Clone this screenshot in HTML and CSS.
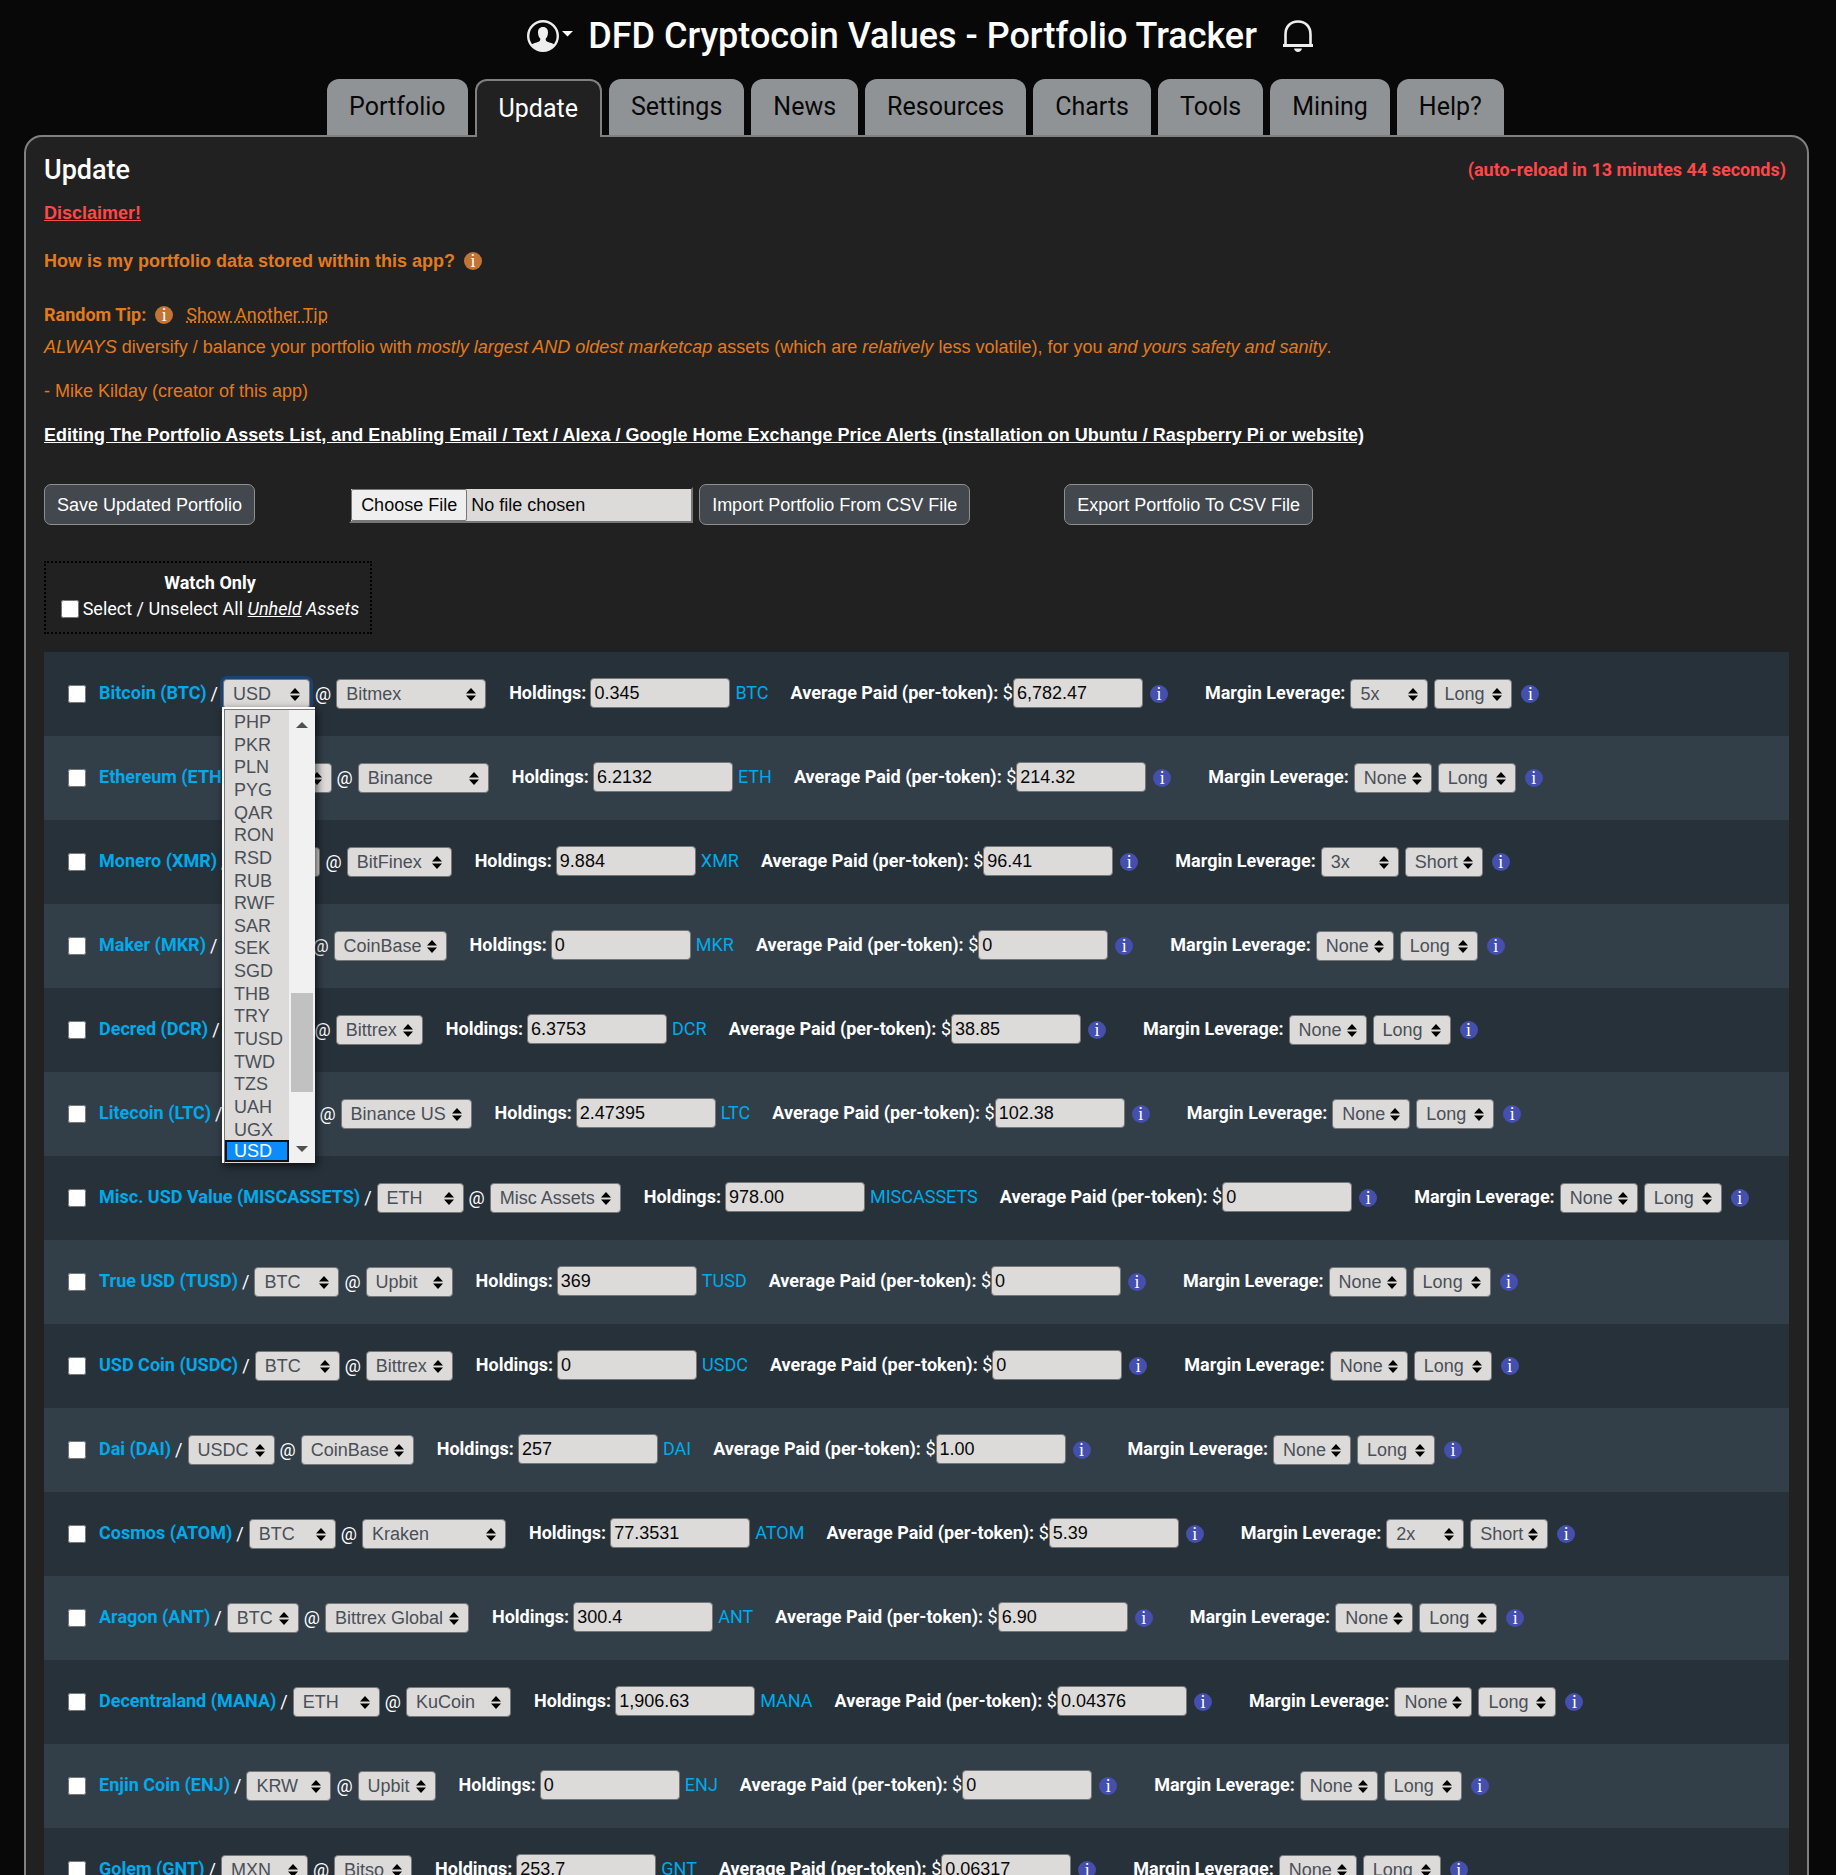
FILE: index.html
```html
<!DOCTYPE html>
<html lang="en">
<head>
<meta charset="utf-8">
<title>DFD Cryptocoin Values - Portfolio Tracker</title>
<link rel="stylesheet" href="styles.css">
</head>
<body>
<header class="top">
  <button class="icon-btn account" aria-label="Account">
    <svg width="32" height="32" viewBox="0 0 32 32"><circle cx="16" cy="16" r="14.8" fill="none" stroke="#eee" stroke-width="2.4"/><path fill="#eee" d="M16 7c-3.400 0-5 2.300-5 5.400 0 2.600.9 4.800 2.200 6.100.3 1.800-.3 2.700-1.600 3.200-2.700.9-5.400 1.500-7.100 3.100C7.300 28.400 11.300 31 16 31s8.700-2.600 11.500-6.200c-1.700-1.600-4.400-2.200-7.100-3.100-1.300-.5-1.900-1.400-1.600-3.200 1.300-1.300 2.200-3.500 2.200-6.100C21 9.300 19.400 7 16 7z"/></svg>
    <svg width="11" height="6" viewBox="0 0 11 6"><path fill="#fff" d="M0 0h11L5.500 5.500z"/></svg>
  </button>
  <h1>DFD Cryptocoin Values - Portfolio Tracker</h1>
  <button class="icon-btn" aria-label="Alerts">
    <svg width="32" height="32" viewBox="0 0 32 32"><path fill="none" stroke="#eee" stroke-width="2.600" d="M3.500 25V14.500C3.500 6.500 8.500 1.500 16 1.500s12.500 5 12.500 13V25"/><path fill="#eee" d="M1 24h30v3H1zM12 28.500h8c-.5 2.200-2 3.500-4 3.500s-3.500-1.300-4-3.500z"/></svg>
  </button>
</header>
<nav class="tabs">
  <a href="#portfolio">Portfolio</a>
  <a href="#update" class="active">Update</a>
  <a href="#settings">Settings</a>
  <a href="#news">News</a>
  <a href="#resources">Resources</a>
  <a href="#charts">Charts</a>
  <a href="#tools">Tools</a>
  <a href="#mining">Mining</a>
  <a href="#help">Help?</a>
</nav>
<main class="panel">
  <div class="panel-head">
    <h2>Update</h2>
    <strong class="reload">(auto-reload in 13 minutes 44 seconds)</strong>
  </div>
  <p class="disclaimer"><a href="#disclaimer">Disclaimer!</a></p>
  <p class="stored"><b>How is my portfolio data stored within this app?</b><span class="info orange">i</span></p>
  <p class="tip-head"><b>Random Tip:</b><span class="info orange">i</span><a href="#tip">Show Another Tip</a></p>
  <p class="tip"><i>ALWAYS</i> diversify / balance your portfolio with <i>mostly largest AND oldest marketcap</i> assets (which are <i>relatively</i> less volatile), for you <i>and yours safety and sanity</i>.</p>
  <p class="author">- Mike Kilday (creator of this app)</p>
  <p class="editing"><a href="#editing">Editing The Portfolio Assets List, and Enabling Email / Text / Alexa / Google Home Exchange Price Alerts (installation on Ubuntu / Raspberry Pi or website)</a></p>
  <div class="actions">
    <button class="btn">Save Updated Portfolio</button>
    <form class="import"><input type="file" class="file" aria-label="CSV file"><button type="button" class="btn">Import Portfolio From CSV File</button></form>
    <button class="btn">Export Portfolio To CSV File</button>
  </div>
  <fieldset class="watch">
    <b>Watch Only</b>
    <label><input type="checkbox"> <span>Select / Unselect All <i><u>Unheld</u> Assets</i></span></label>
  </fieldset>
  <div class="assets">
    <div class="row"><input type="checkbox" aria-label="Watch Bitcoin"><b class="name">Bitcoin (BTC)</b><span>/</span>
      <span class="open"><select class="w87 focus" aria-label="Market"><option>USD</option></select>
        <span class="menu">
          <span class="options" role="listbox" aria-label="Market list"><span role="option">PHP</span><span role="option">PKR</span><span role="option">PLN</span><span role="option">PYG</span><span role="option">QAR</span><span role="option">RON</span><span role="option">RSD</span><span role="option">RUB</span><span role="option">RWF</span><span role="option">SAR</span><span role="option">SEK</span><span role="option">SGD</span><span role="option">THB</span><span role="option">TRY</span><span role="option">TUSD</span><span role="option">TWD</span><span role="option">TZS</span><span role="option">UAH</span><span role="option">UGX</span><span role="option" class="selected" aria-selected="true">USD</span></span>
          <span class="scroll"><svg width="12" height="6" viewBox="0 0 12 6"><path fill="#505050" d="M0 6h12L6 0z"/></svg><span class="thumb"></span><svg width="12" height="6" viewBox="0 0 12 6"><path fill="#505050" d="M0 0h12L6 6z"/></svg></span>
        </span></span>
      <span>@</span><select class="w150" aria-label="Exchange"><option>Bitmex</option></select><label class="hold"><b>Holdings:</b><input type="text" value="0.345"></label><span class="sym">BTC</span><label class="paid"><b>Average Paid (per-token):</b> $<input type="text" value="6,782.47"></label><span class="info">i</span><b class="margin">Margin Leverage:</b><select aria-label="Leverage"><option>5x</option></select><select aria-label="Direction"><option>Long</option></select><span class="info">i</span></div>
    <div class="row"><input type="checkbox" aria-label="Watch Ethereum"><b class="name">Ethereum (ETH)</b><span>/</span><select class="w87" aria-label="Market"><option>BTC</option></select><span>@</span><select class="w131" aria-label="Exchange"><option>Binance</option></select><label class="hold"><b>Holdings:</b><input type="text" value="6.2132"></label><span class="sym">ETH</span><label class="paid"><b>Average Paid (per-token):</b> $<input type="text" value="214.32"></label><span class="info">i</span><b class="margin">Margin Leverage:</b><select aria-label="Leverage"><option>None</option></select><select aria-label="Direction"><option>Long</option></select><span class="info">i</span></div>
    <div class="row"><input type="checkbox" aria-label="Watch Monero"><b class="name">Monero (XMR)</b><span>/</span><select class="w87" aria-label="Market"><option>BTC</option></select><span>@</span><select class="w105" aria-label="Exchange"><option>BitFinex</option></select><label class="hold"><b>Holdings:</b><input type="text" value="9.884"></label><span class="sym">XMR</span><label class="paid"><b>Average Paid (per-token):</b> $<input type="text" value="96.41"></label><span class="info">i</span><b class="margin">Margin Leverage:</b><select aria-label="Leverage"><option>3x</option></select><select aria-label="Direction"><option>Short</option></select><span class="info">i</span></div>
    <div class="row"><input type="checkbox" aria-label="Watch Maker"><b class="name">Maker (MKR)</b><span>/</span><select class="w85" aria-label="Market"><option>BTC</option></select><span>@</span><select class="w113" aria-label="Exchange"><option>CoinBase</option></select><label class="hold"><b>Holdings:</b><input type="text" value="0"></label><span class="sym">MKR</span><label class="paid"><b>Average Paid (per-token):</b> $<input type="text" value="0"></label><span class="info">i</span><b class="margin">Margin Leverage:</b><select aria-label="Leverage"><option>None</option></select><select aria-label="Direction"><option>Long</option></select><span class="info">i</span></div>
    <div class="row"><input type="checkbox" aria-label="Watch Decred"><b class="name">Decred (DCR)</b><span>/</span><select class="w85" aria-label="Market"><option>BTC</option></select><span>@</span><select class="w87" aria-label="Exchange"><option>Bittrex</option></select><label class="hold"><b>Holdings:</b><input type="text" value="6.3753"></label><span class="sym">DCR</span><label class="paid"><b>Average Paid (per-token):</b> $<input type="text" value="38.85"></label><span class="info">i</span><b class="margin">Margin Leverage:</b><select aria-label="Leverage"><option>None</option></select><select aria-label="Direction"><option>Long</option></select><span class="info">i</span></div>
    <div class="row"><input type="checkbox" aria-label="Watch Litecoin"><b class="name">Litecoin (LTC)</b><span>/</span><select class="w87" aria-label="Market"><option>BTC</option></select><span>@</span><select class="w131" aria-label="Exchange"><option>Binance US</option></select><label class="hold"><b>Holdings:</b><input type="text" value="2.47395"></label><span class="sym">LTC</span><label class="paid"><b>Average Paid (per-token):</b> $<input type="text" value="102.38"></label><span class="info">i</span><b class="margin">Margin Leverage:</b><select aria-label="Leverage"><option>None</option></select><select aria-label="Direction"><option>Long</option></select><span class="info">i</span></div>
    <div class="row"><input type="checkbox" aria-label="Watch Misc. USD Value"><b class="name">Misc. USD Value (MISCASSETS)</b><span>/</span><select class="w87" aria-label="Market"><option>ETH</option></select><span>@</span><select class="w131" aria-label="Exchange"><option>Misc Assets</option></select><label class="hold"><b>Holdings:</b><input type="text" value="978.00"></label><span class="sym">MISCASSETS</span><label class="paid"><b>Average Paid (per-token):</b> $<input type="text" value="0"></label><span class="info">i</span><b class="margin">Margin Leverage:</b><select aria-label="Leverage"><option>None</option></select><select aria-label="Direction"><option>Long</option></select><span class="info">i</span></div>
    <div class="row"><input type="checkbox" aria-label="Watch True USD"><b class="name">True USD (TUSD)</b><span>/</span><select class="w85" aria-label="Market"><option>BTC</option></select><span>@</span><select class="w87" aria-label="Exchange"><option>Upbit</option></select><label class="hold"><b>Holdings:</b><input type="text" value="369"></label><span class="sym">TUSD</span><label class="paid"><b>Average Paid (per-token):</b> $<input type="text" value="0"></label><span class="info">i</span><b class="margin">Margin Leverage:</b><select aria-label="Leverage"><option>None</option></select><select aria-label="Direction"><option>Long</option></select><span class="info">i</span></div>
    <div class="row"><input type="checkbox" aria-label="Watch USD Coin"><b class="name">USD Coin (USDC)</b><span>/</span><select class="w85" aria-label="Market"><option>BTC</option></select><span>@</span><select class="w87" aria-label="Exchange"><option>Bittrex</option></select><label class="hold"><b>Holdings:</b><input type="text" value="0"></label><span class="sym">USDC</span><label class="paid"><b>Average Paid (per-token):</b> $<input type="text" value="0"></label><span class="info">i</span><b class="margin">Margin Leverage:</b><select aria-label="Leverage"><option>None</option></select><select aria-label="Direction"><option>Long</option></select><span class="info">i</span></div>
    <div class="row"><input type="checkbox" aria-label="Watch Dai"><b class="name">Dai (DAI)</b><span>/</span><select class="w87" aria-label="Market"><option>USDC</option></select><span>@</span><select class="w113" aria-label="Exchange"><option>CoinBase</option></select><label class="hold"><b>Holdings:</b><input type="text" value="257"></label><span class="sym">DAI</span><label class="paid"><b>Average Paid (per-token):</b> $<input type="text" value="1.00"></label><span class="info">i</span><b class="margin">Margin Leverage:</b><select aria-label="Leverage"><option>None</option></select><select aria-label="Direction"><option>Long</option></select><span class="info">i</span></div>
    <div class="row"><input type="checkbox" aria-label="Watch Cosmos"><b class="name">Cosmos (ATOM)</b><span>/</span><select class="w87" aria-label="Market"><option>BTC</option></select><span>@</span><select class="w144" aria-label="Exchange"><option>Kraken</option></select><label class="hold"><b>Holdings:</b><input type="text" value="77.3531"></label><span class="sym">ATOM</span><label class="paid"><b>Average Paid (per-token):</b> $<input type="text" value="5.39"></label><span class="info">i</span><b class="margin">Margin Leverage:</b><select aria-label="Leverage"><option>2x</option></select><select aria-label="Direction"><option>Short</option></select><span class="info">i</span></div>
    <div class="row"><input type="checkbox" aria-label="Watch Aragon"><b class="name">Aragon (ANT)</b><span>/</span><select class="w72" aria-label="Market"><option>BTC</option></select><span>@</span><select class="w144" aria-label="Exchange"><option>Bittrex Global</option></select><label class="hold"><b>Holdings:</b><input type="text" value="300.4"></label><span class="sym">ANT</span><label class="paid"><b>Average Paid (per-token):</b> $<input type="text" value="6.90"></label><span class="info">i</span><b class="margin">Margin Leverage:</b><select aria-label="Leverage"><option>None</option></select><select aria-label="Direction"><option>Long</option></select><span class="info">i</span></div>
    <div class="row"><input type="checkbox" aria-label="Watch Decentraland"><b class="name">Decentraland (MANA)</b><span>/</span><select class="w87" aria-label="Market"><option>ETH</option></select><span>@</span><select class="w105" aria-label="Exchange"><option>KuCoin</option></select><label class="hold"><b>Holdings:</b><input type="text" value="1,906.63"></label><span class="sym">MANA</span><label class="paid"><b>Average Paid (per-token):</b> $<input type="text" value="0.04376"></label><span class="info">i</span><b class="margin">Margin Leverage:</b><select aria-label="Leverage"><option>None</option></select><select aria-label="Direction"><option>Long</option></select><span class="info">i</span></div>
    <div class="row"><input type="checkbox" aria-label="Watch Enjin Coin"><b class="name">Enjin Coin (ENJ)</b><span>/</span><select class="w85" aria-label="Market"><option>KRW</option></select><span>@</span><select aria-label="Exchange"><option>Upbit</option></select><label class="hold"><b>Holdings:</b><input type="text" value="0"></label><span class="sym">ENJ</span><label class="paid"><b>Average Paid (per-token):</b> $<input type="text" value="0"></label><span class="info">i</span><b class="margin">Margin Leverage:</b><select aria-label="Leverage"><option>None</option></select><select aria-label="Direction"><option>Long</option></select><span class="info">i</span></div>
    <div class="row"><input type="checkbox" aria-label="Watch Golem"><b class="name">Golem (GNT)</b><span>/</span><select class="w87" aria-label="Market"><option>MXN</option></select><span>@</span><select aria-label="Exchange"><option>Bitso</option></select><label class="hold"><b>Holdings:</b><input type="text" value="253.7"></label><span class="sym">GNT</span><label class="paid"><b>Average Paid (per-token):</b> $<input type="text" value="0.06317"></label><span class="info">i</span><b class="margin">Margin Leverage:</b><select aria-label="Leverage"><option>None</option></select><select aria-label="Direction"><option>Long</option></select><span class="info">i</span></div>
  </div>
</main>
</body>
</html>
```
FILE: styles.css
```css
* { box-sizing: border-box; }
html { background: #080808; }
body {
  margin: 0;
  background: #080808;
  color: #fff;
  font: 18px/24px Roboto, sans-serif;
}
p, h1, h2 { margin: 0; }
b, strong { font-weight: 700; }

.top {
  display: flex;
  justify-content: center;
  align-items: center;
  gap: 15px;
  height: 72px;
  padding-left: 5px;
}
.top h1 { font-size: 36px; line-height: 40px; font-weight: 500; padding-right: 10px; }
.icon-btn { display: flex; gap: 3px; padding: 0; border: 0; background: none; }
.account svg + svg { margin-top: 11px; }

.tabs {
  display: flex;
  justify-content: center;
  gap: 7px;
  height: 65px;
  padding: 7px 5px 0 0;
  margin-bottom: -2px;
  position: relative;
}
.tabs a {
  padding: 0 22px;
  border-radius: 12px 12px 0 0;
  background: #909396;
  color: #080808;
  font-size: 25px;
  line-height: 56px;
  height: 56px;
  text-decoration: none;
}
.tabs a.active {
  height: 58px;
  border: 2px solid #808080;
  border-bottom: 0;
  background: #212121;
  color: #fff;
}

.panel {
  margin: 0 27px 0 24px;
  padding: 14px 18px 30px;
  border: 2px solid #808080;
  border-radius: 18px 18px 0 0;
  background: #212121;
}
.panel-head { display: flex; justify-content: space-between; align-items: center; height: 38px; padding-right: 3px; }
.panel-head h2 { font-size: 27px; line-height: 32px; font-weight: 500; }
.reload { color: #ff4747; }

.disclaimer, .stored, .tip, .author, .editing { font-family: "Liberation Sans", Arial, sans-serif; }
.disclaimer { margin-top: 12px; font-weight: 700; }
.disclaimer a { color: #ff4747; }
.stored, .tip-head, .tip, .author { color: #e27b1e; }
.stored, .tip-head { display: flex; align-items: center; }
.stored { margin-top: 24px; }
.tip-head { margin-top: 30px; }
.tip-head a { margin-left: 13px; color: inherit; text-decoration: underline dotted; }
.tip { margin-top: 8px; }
.author { margin-top: 20px; }
.editing { margin-top: 20px; font-weight: 700; }
.editing a { color: #fff; }

.info {
  flex: none;
  display: inline-block;
  width: 18px;
  height: 18px;
  margin-left: 7px;
  border-radius: 50%;
  background: #444fae;
  color: #fff;
  font: 18px/18px "Liberation Serif", serif;
  text-align: center;
}
.info.orange { margin-left: 9px; background: #c27435; }

.actions { display: flex; align-items: center; gap: 94px; margin-top: 37px; }
.import { display: flex; align-items: center; gap: 6px; }
.btn {
  height: 41px;
  padding: 0 12px;
  border: 1px solid #8f8f8f;
  border-radius: 7px;
  background: #42484e;
  color: #fff;
  font: 18px/24px "Liberation Sans", Arial, sans-serif;
}
.file {
  width: 344px;
  height: 36px;
  border: 2px inset #767676;
  background: #dddada;
  color: #080808;
  font: 18px/24px "Liberation Sans", Arial, sans-serif;
}
.file::file-selector-button {
  height: 32px;
  padding: 0 9px;
  border: 1px solid #767676;
  border-radius: 2px;
  background: #efefef;
  color: #080808;
  font: inherit;
}

.watch {
  display: flex;
  flex-direction: column;
  align-items: center;
  width: 328px;
  height: 73px;
  margin: 36px 0 18px;
  padding: 8px 0 0 4px;
  border: 2px dotted #000;
  white-space: nowrap;
}
.watch label { display: flex; align-items: center; gap: 4px; margin-top: 2px; }

input[type="checkbox"] { width: 18px; height: 18px; margin: 0; flex: none; }

.row {
  display: flex;
  align-items: center;
  height: 84px;
  padding-left: 24px;
  background: #27313a;
  white-space: nowrap;
}
.row:nth-child(even) { background: #323e48; }
.row > span, .row > label { flex: none; }
.name { margin: 0 4px 0 13px; color: #00aaeb; }
.sym { color: #00aaeb; margin-left: 5px; }
.hold, .paid { display: flex; align-items: center; white-space: pre; }
.hold { margin-left: 23px; }
.paid { margin-left: 22px; }
.margin { margin-left: 37px; }
.name, .sym, .hold, .paid, .margin { padding-bottom: 2px; }
.row input[type="text"] {
  height: 30px;
  padding: 0 3px;
  border: 1px solid #777;
  border-radius: 4px;
  background: #dddada;
  color: #080808;
  font: 18px/24px "Liberation Sans", Arial, sans-serif;
}
.hold input[type="text"] { width: 140px; margin-left: 4px; }
.paid input[type="text"] { width: 130px; }
.row select {
  appearance: none;
  width: 78px;
  height: 30px;
  margin: 0 0 0 5px;
  padding: 4px 0 4px 9px;
  border: 1px solid #777;
  border-radius: 4px;
  background: #dddada url("data:image/svg+xml,%3Csvg xmlns='http://www.w3.org/2000/svg' width='10' height='13'%3E%3Cpath d='M0 5.500 5 0l5 5.500zM0 7.500 5 13l5-5.500z'/%3E%3C/svg%3E") no-repeat right 9px center;
  color: #495057;
  font: 18px/20px "Liberation Sans", Arial, sans-serif;
}
.row select + span { margin-left: 5px; }
.row select + select { margin-left: 6px; }
.row select + .info { margin-left: 9px; }
.row select.w72 { width: 72px; }
.row select.w85 { width: 85px; }
.row select.w87 { width: 87px; }
.row select.w105 { width: 105px; }
.row select.w113 { width: 113px; }
.row select.w131 { width: 131px; }
.row select.w144 { width: 144px; }
.row select.w150 { width: 150px; }
.row select.focus { box-shadow: 0 0 0 3px #1d4270; }

.open { position: relative; display: flex; margin-right: 5px; }
.row .menu {
  position: absolute;
  top: 28px;
  left: 4px;
  z-index: 2;
  display: flex;
  width: 93px;
  height: 456px;
  margin: 0;
  padding: 2px 0 0 2px;
  background: #fff;
  box-shadow: 2px 3px 8px rgba(0, 0, 0, .7);
}
.options {
  flex: 1;
  display: grid;
  grid-template-rows: repeat(20, 1fr);
  border: 1px solid #777;
  border-width: 1px 0 0 1px;
  background: #dddada;
  color: #495057;
  font: 18px/24px "Liberation Sans", Arial, sans-serif;
}
.options span { height: 22px; padding-left: 9px; }
.options .selected { background: #0a8cff; color: #fff; border: 2px solid #111; line-height: 18px; padding-left: 7px; }
.scroll {
  display: flex;
  flex-direction: column;
  align-items: center;
  width: 26px;
  padding: 12px 0 11px;
  border-top: 1px solid #777;
  background: #f1f1f1;
}
.thumb { width: 22px; height: 99px; margin: auto 0 54px; background: #c1c1c1; }
```
